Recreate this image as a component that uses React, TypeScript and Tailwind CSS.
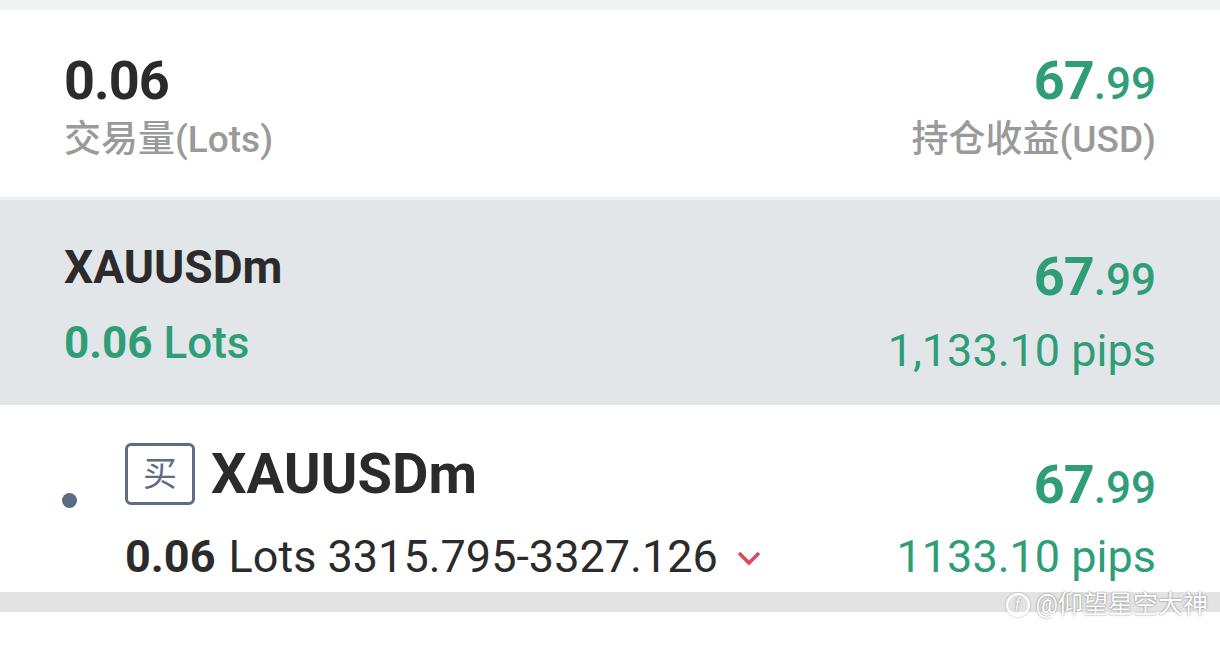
const latin = "font-['Roboto','Noto_Sans_CJK_SC',sans-serif]"

function Amount({ big = "67", small = ".99" }: { big?: string; small?: string }) {
  return (
    <p className="leading-none text-[#2f9e77]">
      <span className="text-[54px] font-bold tracking-[-1px]">{big}</span>
      <span className="text-[44px] font-medium">{small}</span>
    </p>
  )
}

export default function App() {
  return (
    <main className={`relative flex h-[647px] w-full flex-col bg-white ${latin}`}>
      <div className="h-[10px] bg-[#f2f3f5]" />

      <section className="flex h-[187px] items-start justify-between px-[64px] pt-[44px]">
        <div>
          <p className="text-[54px] font-bold leading-none tracking-[-1px] text-[#2b2b2b]">0.06</p>
          <p className="mt-[13px] text-[37px] font-medium leading-none text-[#9a9a9a]">交易量(Lots)</p>
        </div>
        <div className="flex flex-col items-end">
          <Amount />
          <p className="mt-[13px] text-[37px] font-medium leading-none text-[#9a9a9a]">持仓收益(USD)</p>
        </div>
      </section>

      <div className="h-[3px] bg-[#eef0f2]" />

      <section className="flex h-[205px] items-start justify-between bg-[#e3e6e9] px-[64px] pt-[44px]">
        <div>
          <p className="text-[46px] font-bold leading-none text-[#2b2b2b]">XAUUSDm</p>
          <p className="mt-[31px] text-[44px] leading-none text-[#2f9e77]">
            <span className="font-bold">0.06</span> <span className="font-medium">Lots</span>
          </p>
        </div>
        <div className="flex flex-col items-end pt-[6px]">
          <Amount />
          <p className="mt-[24px] text-[45px] leading-none text-[#2f9e77]">1,133.10 pips</p>
        </div>
      </section>

      <section className="flex h-[187px] items-start justify-between pl-[62px] pr-[64px] pt-[38px]">
        <div className="flex items-start gap-[48px]">
          <span className="mt-[50px] h-[15px] w-[15px] rounded-full bg-[#5b6b84]" />
          <div>
            <div className="flex items-center gap-[16px]">
              <span className="flex h-[62px] w-[70px] items-center justify-center rounded-[6px] border-[3px] border-[#5f6d80] text-[34px] leading-none text-[#5f6d80]">
                买
              </span>
              <span className="text-[56px] font-bold leading-none text-[#2b2b2b]">XAUUSDm</span>
            </div>
            <div className="mt-[29px] flex items-center text-[45px] leading-none text-[#2b2b2b]">
              <span className="font-bold">0.06</span>
              <span className="ml-[13px]">Lots 3315.795-3327.126</span>
              <svg className="ml-[18px] mt-[2px]" width="26" height="16" viewBox="0 0 26 16">
                <path d="M3 3 L13 13 L23 3" fill="none" stroke="#d9485f" strokeWidth="3.5" />
              </svg>
            </div>
          </div>
        </div>
        <div className="flex flex-col items-end pt-[15px]">
          <Amount />
          <p className="mt-[22px] text-[45px] leading-none text-[#2f9e77]">1133.10 pips</p>
        </div>
      </section>

      <div className="h-[20px] bg-[#e3e3e3]" />
      <div className="flex-1 bg-white" />

      <div className="absolute right-[12px] top-[592px] flex items-center gap-[6px] text-[25px] leading-none text-white [text-shadow:0_0_2px_rgba(0,0,0,0.55)]">
        <span className="flex h-[24px] w-[24px] items-center justify-center rounded-full border-2 border-white text-[16px] italic [box-shadow:0_0_2px_rgba(0,0,0,0.4)]">
          f
        </span>
        <span>@仰望星空大神</span>
      </div>
    </main>
  )
}
